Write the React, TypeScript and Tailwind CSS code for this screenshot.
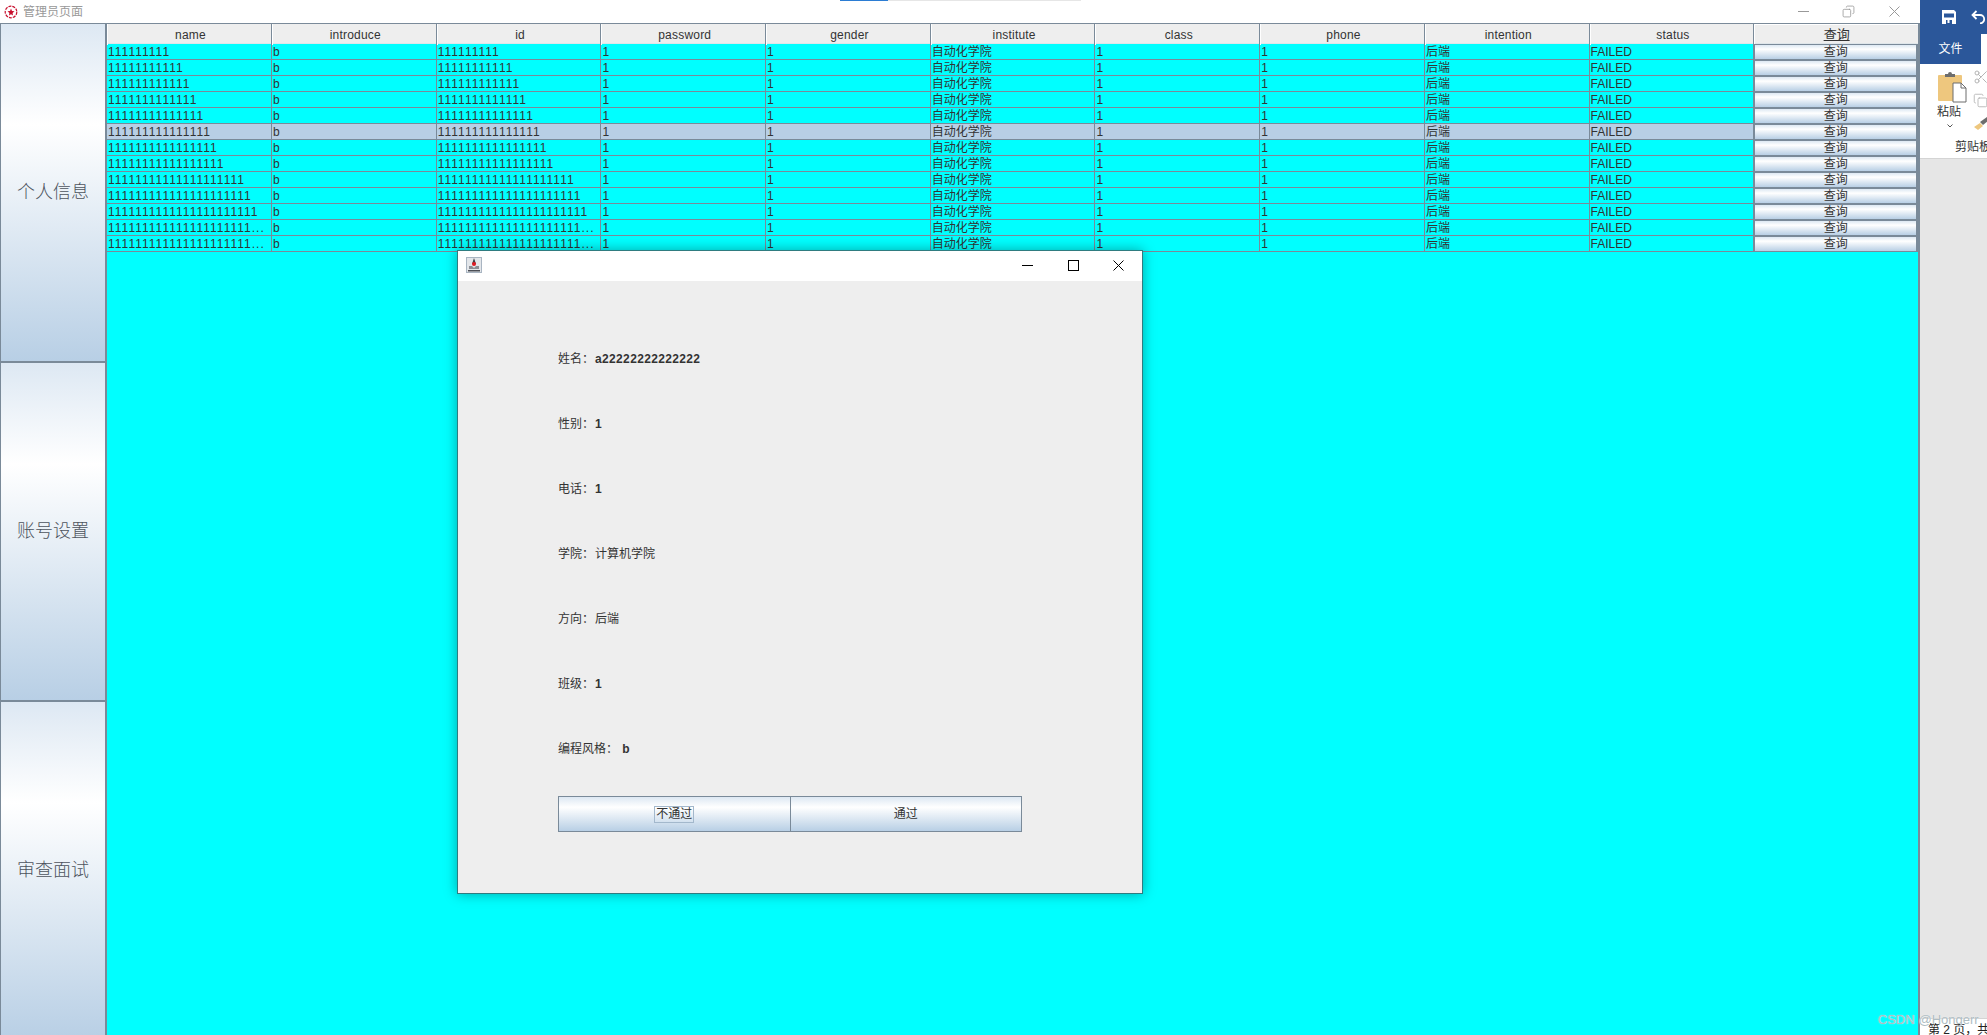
import { Copy, Scissors } from "lucide-react";

const FONT = "font-['Liberation_Sans','Noto_Sans_CJK_SC',sans-serif]";
const GRADIENT = "bg-[linear-gradient(180deg,#dde8f3_0%,#ffffff_30%,#b8cfe5_100%)]";
const GRID = "grid grid-cols-[165px_repeat(10,minmax(0,1fr))]";

const columns = [
  "name",
  "introduce",
  "id",
  "password",
  "gender",
  "institute",
  "class",
  "phone",
  "intention",
  "status",
];

const ones = [9, 11, 12, 13, 14, 15, 16, 17, 20, 21, 22, -1, -1];

const details = [
  { label: "姓名：", value: "a22222222222222", bold: true },
  { label: "性别：", value: "1", bold: true },
  { label: "电话：", value: "1", bold: true },
  { label: "学院：", value: "计算机学院", bold: false },
  { label: "方向：", value: "后端", bold: false },
  { label: "班级：", value: "1", bold: true },
  { label: "编程风格： ", value: "b", bold: true },
];

const idText = (n: number) => (n < 0 ? "1".repeat(21) + "..." : "1".repeat(n));

const Cell = ({ text, digits }: { text: string; digits?: boolean }) => (
  <div
    className={`overflow-hidden whitespace-nowrap border-r border-b border-[#7a8a99] pl-[1px] text-[12px] leading-[17px] text-[#333333] ${digits ? "tracking-[1.02px]" : ""}`}
  >
    {text}
  </div>
);

const SideButton = ({ label }: { label: string }) => (
  <button
    className={`flex h-[339px] w-full shrink-0 items-center justify-center border-l border-b-[2px] border-[#7a8a99] ${GRADIENT} text-[18px] font-light text-[#4d545e]`}
  >
    {label}
  </button>
);

const MinLine = ({ color }: { color: string }) => (
  <svg width="11" height="1" viewBox="0 0 11 1" className="shrink-0">
    <rect width="11" height="1" fill={color} />
  </svg>
);

const CloseCross = ({ color }: { color: string }) => (
  <svg width="11" height="11" viewBox="0 0 11 11" fill="none" className="shrink-0">
    <path d="M0.500 0.500l10 10M10.500 0.500l-10 10" stroke={color} />
  </svg>
);

const AppIcon = () => (
  <svg width="14" height="14" viewBox="0 0 14 14" fill="none" className="shrink-0">
    <circle cx="7" cy="7" r="5.800" stroke="#c8102e" strokeWidth="1.200" strokeDasharray="3 1" />
    <path d="M7 3.500 8 6l2.500.3L8.600 8 9 10.500 7 9.200 5 10.500 5.400 8 3.500 6.300 6 6z" fill="#c8102e" />
  </svg>
);

const JavaIcon = () => (
  <svg width="16" height="16" viewBox="0 0 16 16" className="shrink-0">
    <rect width="16" height="16" fill="#e3e6ea" />
    <rect x="0.500" y="0.500" width="15" height="15" fill="none" stroke="#a9b5c2" />
    <path d="M8 1 6 7h4z" fill="#3c3f46" />
    <path d="M3 9h3l2 2 2-2h3v3H3z" fill="#8b8f96" />
    <path d="M2 13h12v1.500H2z" fill="#4b4e55" />
    <circle cx="8" cy="7" r="2" fill="#e01b24" />
  </svg>
);

const SaveIcon = () => (
  <svg width="14" height="14" viewBox="0 0 14 14" className="shrink-0">
    <path d="M0 0h12l2 2v12H0z" fill="#ffffff" />
    <rect x="2" y="3.500" width="10" height="4" fill="#2b579a" />
    <rect x="4" y="10" width="6" height="4" fill="#2b579a" />
    <rect x="5.500" y="10" width="2" height="3" fill="#ffffff" />
  </svg>
);

const UndoIcon = () => (
  <svg width="15" height="14" viewBox="0 0 15 14" fill="none" className="shrink-0">
    <path d="M5.500 1 1.500 5l4 4M2 5h7a4.200 4.200 0 0 1 0 8.400" stroke="#ffffff" strokeWidth="1.800" />
  </svg>
);

const PasteIcon = () => (
  <svg width="30" height="32" viewBox="0 0 30 32">
    <rect x="1" y="4" width="24" height="26" rx="1" fill="#eec77e" />
    <path d="M8 5V3h3a2 2 0 0 1 4 0h3v3H8z" fill="#6d6d6d" />
    <path d="M16 12h8l5 5v14H16z" fill="#ffffff" stroke="#6d6d6d" />
    <path d="M24 12v5h5" fill="none" stroke="#6d6d6d" />
  </svg>
);

const Ribbon = () => (
  <div className="flex h-full w-[67px] shrink-0 flex-col overflow-hidden bg-[#e6e6e6]">
    <div className="flex h-[34px] items-center gap-[15px] bg-[#2b579a] pl-[22px]">
      <SaveIcon />
      <UndoIcon />
    </div>
    <div className="flex h-[30px] bg-white">
      <div className="flex w-[61px] items-center justify-center bg-[#2b579a] text-[12px] text-white">文件</div>
    </div>
    <div className="relative h-[95px] border-b border-[#d4d4d4] bg-white">
      <div className="absolute top-[7px] left-[17px]">
        <PasteIcon />
      </div>
      <div className="absolute top-[39px] left-[17px] text-[12px] leading-[18px] text-[#333333]">粘贴</div>
      <svg width="6" height="4" viewBox="0 0 6 4" fill="none" className="absolute top-[60px] left-[27px]">
        <path d="M0.500 0.500 3 3l2.500-2.500" stroke="#555555" />
      </svg>
      <Scissors size={16} strokeWidth={1.5} className="absolute top-[5px] left-[53px] text-[#b5b5b5]" />
      <Copy size={15} strokeWidth={1.2} className="absolute top-[29px] left-[53px] text-[#a8a8a8]" />
      <svg width="16" height="14" viewBox="0 0 16 14" className="absolute top-[53px] left-[53px]">
        <path d="M1 10 7 6l3 3-5 4z" fill="#eec77e" />
        <path d="M7 5l7-5 2 3-6 5z" fill="#6d6d6d" />
      </svg>
      <div className="absolute top-[74px] left-[35px] whitespace-nowrap text-[12px] leading-[18px] text-[#333333]">
        剪贴板
      </div>
    </div>
    <div className="flex-1" />
    <div className="h-[17px] overflow-hidden whitespace-nowrap border-t border-[#d4d4d4] bg-white pt-[3px] pl-[8px] text-[12px] leading-[17px] text-[#222222]">
      第 2 页，共
    </div>
  </div>
);

const Dialog = () => (
  <div className="absolute top-[250px] left-[457px] flex h-[644px] w-[686px] flex-col border border-[#2f7c80] bg-[#eeeeee] shadow-[0_0_12px_rgba(0,0,0,0.35)]">
    <div className="flex h-[30px] shrink-0 items-center bg-white pr-[18px] pb-[2px] pl-[8px]">
      <JavaIcon />
      <div className="flex-1" />
      <MinLine color="#000000" />
      <div className="ml-[35px] h-[11px] w-[11px] shrink-0 border border-black" />
      <div className="ml-[34px]">
        <CloseCross color="#000000" />
      </div>
    </div>
    <div className="flex flex-1 flex-col pt-[45px] pl-[100px]">
      {details.map(({ label, value, bold }) => (
        <div key={label} className="flex h-[65px] items-center whitespace-pre text-[12px] text-[#333333]">
          <span>{label}</span>
          <span className={`pl-[1px] ${bold ? "font-bold tracking-[0.35px]" : ""}`}>{value}</span>
        </div>
      ))}
      <div className="mt-[15px] flex h-[36px] w-[464px] text-[12px] text-[#333333]">
        <button className={`flex flex-1 items-center justify-center border border-[#7a8a99] ${GRADIENT}`}>
          <span className="border border-[#a3b8cc] px-[1px] leading-[15px]">不通过</span>
        </button>
        <button className={`flex flex-1 items-center justify-center border border-l-0 border-[#7a8a99] ${GRADIENT}`}>
          通过
        </button>
      </div>
    </div>
  </div>
);

export default function App() {
  return (
    <div className={`${FONT} relative flex h-[1035px] w-[1987px] overflow-hidden bg-white`}>
      <div className="flex h-full w-[1920px] shrink-0 flex-col">
        <div className="flex h-[23px] shrink-0 items-center bg-white pr-[20px] pl-[4px]">
          <AppIcon />
          <span className="ml-[5px] text-[12px] text-[#999999]">管理员页面</span>
          <div className="flex-1" />
          <MinLine color="#999999" />
          <Copy size={13} strokeWidth={1.5} className="ml-[33px] -scale-x-100 text-[#999999]" />
          <div className="ml-[34px]">
            <CloseCross color="#999999" />
          </div>
        </div>
        <div className="flex min-h-0 flex-1 border-t border-[#7a8a99]">
          <div className="flex w-[105px] shrink-0 flex-col overflow-hidden">
            <SideButton label="个人信息" />
            <SideButton label="账号设置" />
            <SideButton label="审查面试" />
          </div>
          <div className="min-w-0 flex-1 overflow-hidden border-r-[2px] border-l-[2px] border-[#7a8a99] bg-[#00ffff]">
            <div className="w-[1812px]">
              <div className={`${GRID} h-[20px] border-b border-[#dfe6ea] bg-[#eeeeee]`}>
                {columns.map((column) => (
                  <div
                    key={column}
                    className="border-r border-l border-r-[#7a8a99] border-l-white pt-[2px] pl-[2px] text-center text-[12px] leading-[18px] tracking-[0.2px] text-[#333333]"
                  >
                    {column}
                  </div>
                ))}
                <div className="border border-white pt-[1px] text-center text-[13px] leading-[18px] text-[#333333] underline">
                  查询
                </div>
              </div>
              {ones.map((n, i) => {
                const text = idText(n);
                return (
                  <div
                    key={i}
                    className={`${GRID} h-[16px] grid-rows-[16px] ${i === 5 ? "bg-[#b8cfe5]" : "bg-[#00ffff]"}`}
                  >
                    <Cell text={text} digits />
                    <Cell text="b" />
                    <Cell text={text} digits />
                    <Cell text="1" />
                    <Cell text="1" />
                    <Cell text="自动化学院" />
                    <Cell text="1" />
                    <Cell text="1" />
                    <Cell text="后端" />
                    <Cell text="FAILED" />
                    <div className="bg-[#7a8a99] py-[1px] pr-[3px] pl-[1px]">
                      <button className={`block h-[14px] w-full ${GRADIENT} text-[12px] leading-[15px] text-[#333333]`}>
                        查询
                      </button>
                    </div>
                  </div>
                );
              })}
            </div>
          </div>
        </div>
      </div>
      <Ribbon />
      <div className="absolute top-0 left-[840px] flex h-[1px]">
        <div className="h-[1px] w-[48px] bg-[#2b7cd3]" />
        <div className="h-[1px] w-[193px] bg-[#e6e6e6]" />
      </div>
      <Dialog />
      <div className="absolute top-[1010px] left-[1878px] whitespace-nowrap text-[13px] text-[#aebcc2] [text-shadow:0_0_1px_#ffffff]">
        CSDN @Hongerr
      </div>
    </div>
  );
}
